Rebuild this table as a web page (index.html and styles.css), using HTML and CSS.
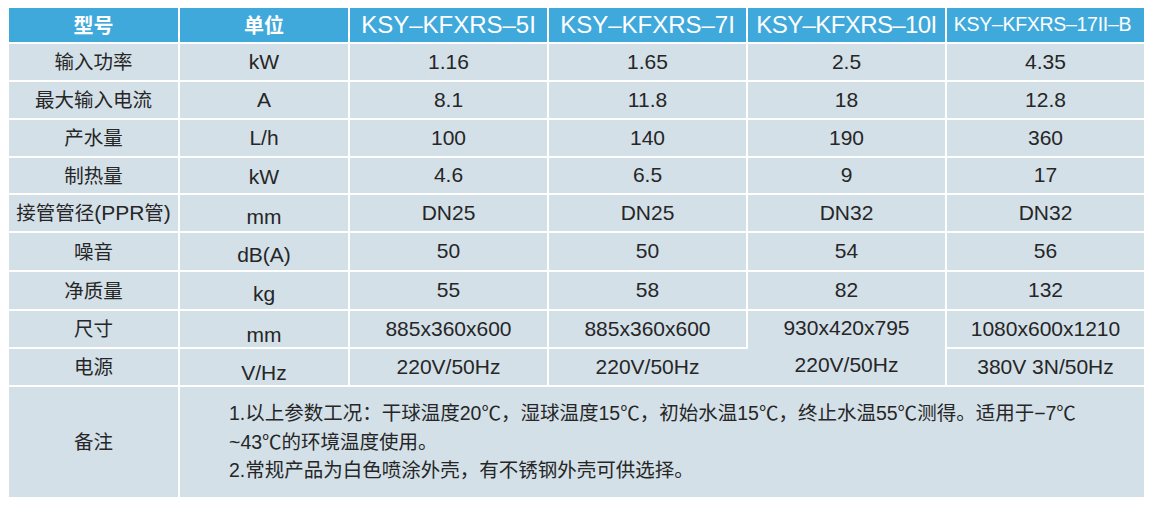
FILE: index.html
```html
<!DOCTYPE html>
<html lang="zh-CN">
<head>
<meta charset="utf-8">
<title>参数表</title>
<link rel="stylesheet" href="styles.css">
</head>
<body>
<div class="spec">
  <div class="cell head zh-bold">型号</div>
  <div class="cell head zh-bold">单位</div>
  <div class="cell head model">KSY–KFXRS–5I</div>
  <div class="cell head model">KSY–KFXRS–7I</div>
  <div class="cell head model tight">KSY–KFXRS–10I</div>
  <div class="cell head model small">KSY–KFXRS–17II–B</div>

  <div class="cell name">输入功率</div>
  <div class="cell unit">kW</div>
  <div class="cell">1.16</div>
  <div class="cell">1.65</div>
  <div class="cell">2.5</div>
  <div class="cell">4.35</div>

  <div class="cell name">最大输入电流</div>
  <div class="cell unit">A</div>
  <div class="cell">8.1</div>
  <div class="cell">11.8</div>
  <div class="cell">18</div>
  <div class="cell">12.8</div>

  <div class="cell name">产水量</div>
  <div class="cell unit">L/h</div>
  <div class="cell">100</div>
  <div class="cell">140</div>
  <div class="cell">190</div>
  <div class="cell">360</div>

  <div class="cell name">制热量</div>
  <div class="cell unit low1">kW</div>
  <div class="cell">4.6</div>
  <div class="cell">6.5</div>
  <div class="cell">9</div>
  <div class="cell">17</div>

  <div class="cell name">接管管径<span class="lat">(PPR</span>管<span class="lat">)</span></div>
  <div class="cell unit low2">mm</div>
  <div class="cell">DN25</div>
  <div class="cell">DN25</div>
  <div class="cell">DN32</div>
  <div class="cell">DN32</div>

  <div class="cell name">噪音</div>
  <div class="cell unit low2">dB(A)</div>
  <div class="cell">50</div>
  <div class="cell">50</div>
  <div class="cell">54</div>
  <div class="cell">56</div>

  <div class="cell name">净质量</div>
  <div class="cell unit low2">kg</div>
  <div class="cell">55</div>
  <div class="cell">58</div>
  <div class="cell">82</div>
  <div class="cell">132</div>

  <div class="cell name">尺寸</div>
  <div class="cell unit low3">mm</div>
  <div class="cell">885x360x600</div>
  <div class="cell">885x360x600</div>
  <div class="cell merged">
    <span class="part">930x420x795</span>
    <span class="part">220V/50Hz</span>
  </div>
  <div class="cell">1080x600x1210</div>

  <div class="cell name">电源</div>
  <div class="cell unit low3">V/Hz</div>
  <div class="cell">220V/50Hz</div>
  <div class="cell fill-right">220V/50Hz</div>
  <div class="cell">380V 3N/50Hz</div>

  <div class="cell name">备注</div>
  <div class="cell notes">
    <p>1.以上参数工况：干球温度20<span class="deg">℃</span>，湿球温度15<span class="deg">℃</span>，初始水温15<span class="deg">℃</span>，终止水温55<span class="deg">℃</span>测得。适用于−7<span class="deg">℃</span><br>~43<span class="deg">℃</span>的环境温度使用。</p>
    <p>2.常规产品为白色喷涂外壳，有不锈钢外壳可供选择。</p>
  </div>
</div>
</body>
</html>
```

FILE: styles.css
```css
html, body {
  margin: 0;
  padding: 0;
  background: #ffffff;
}

body {
  font-family: "Liberation Sans", "Noto Sans CJK SC", sans-serif;
  color: #262626;
}

.spec {
  margin: 8px 0 0 9px;
  width: 1135px;
  display: grid;
  grid-template-columns: 169px 168px 197px 197px 197px 197px;
  grid-template-rows: 34px 36px 36px 36px 35px 36px 37px 37px 36px 36px 110px;
  gap: 2px;
}

.cell {
  background: #d3e0e8;
  display: flex;
  align-items: center;
  justify-content: center;
  font-size: 21px;
  line-height: 1;
  white-space: nowrap;
  padding-bottom: 2px;
  box-sizing: border-box;
}

.head {
  background: #40a9dc;
  color: #ffffff;
  padding-bottom: 0;
}

.zh-bold {
  font-family: "Noto Sans CJK SC", sans-serif;
  font-weight: 700;
  font-size: 20px;
}

.model {
  font-size: 24px;
}

.model.tight {
  letter-spacing: -0.6px;
}

.model.small {
  font-size: 19.5px;
  letter-spacing: -0.3px;
  padding-right: 6px;
}

.name {
  font-family: "Noto Sans CJK SC", sans-serif;
  font-size: 19.5px;
}

.name .lat {
  font-family: "Liberation Sans", sans-serif;
  font-size: 21px;
}

.unit.low1 { padding-top: 2px; padding-bottom: 0; }
.unit.low2 { padding-top: 6px; padding-bottom: 0; }
.unit.low3 { padding-top: 10px; padding-bottom: 0; }

.merged {
  grid-row: span 2;
  flex-direction: column;
  justify-content: space-between;
  padding: 6px 0 10px;
}

.fill-right {
  box-shadow: 2px 0 0 #d3e0e8;
}

.notes {
  grid-column: span 5;
  flex-direction: column;
  align-items: flex-start;
  justify-content: flex-start;
  padding: 11px 0 0 49px;
  font-size: 19.5px;
  line-height: 28px;
  white-space: normal;
}

.notes p {
  margin: 0;
}

.deg {
  font-family: "Noto Sans CJK SC", sans-serif;
}
```
